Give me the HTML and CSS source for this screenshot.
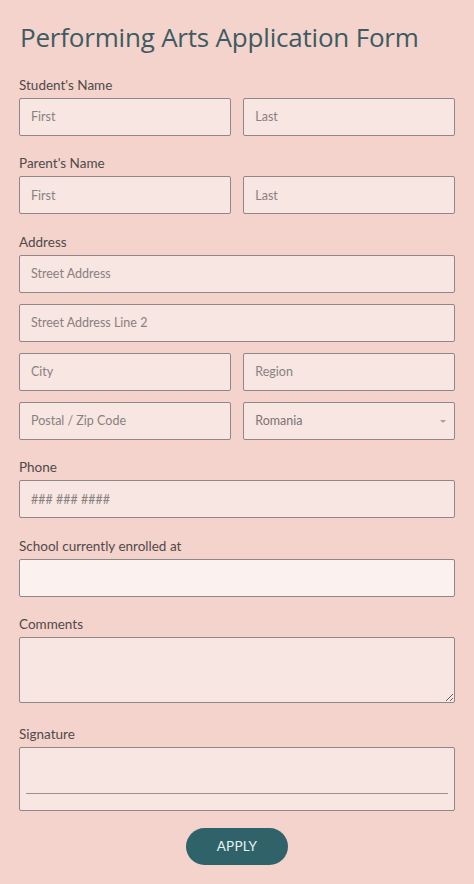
FILE: index.html
```html
<!DOCTYPE html>
<html lang="en">
<head>
<meta charset="utf-8">
<title>Performing Arts Application Form</title>
<link rel="stylesheet" href="styles.css">
</head>
<body>
<form class="form">
  <h1 class="title">Performing Arts Application Form</h1>

  <div class="field">
    <label class="label">Student's Name</label>
    <div class="row">
      <input class="input" type="text" placeholder="First">
      <input class="input" type="text" placeholder="Last">
    </div>
  </div>

  <div class="field">
    <label class="label">Parent's Name</label>
    <div class="row">
      <input class="input" type="text" placeholder="First">
      <input class="input" type="text" placeholder="Last">
    </div>
  </div>

  <div class="field">
    <label class="label">Address</label>
    <div class="stack">
      <input class="input" type="text" placeholder="Street Address">
      <input class="input" type="text" placeholder="Street Address Line 2">
      <div class="row">
        <input class="input" type="text" placeholder="City">
        <input class="input" type="text" placeholder="Region">
      </div>
      <div class="row">
        <input class="input" type="text" placeholder="Postal / Zip Code">
        <div class="select-wrap">
          <select class="input select">
            <option>Romania</option>
          </select>
        </div>
      </div>
    </div>
  </div>

  <div class="field">
    <label class="label">Phone</label>
    <input class="input" type="text" placeholder="### ### ####">
  </div>

  <div class="field">
    <label class="label">School currently enrolled at</label>
    <input class="input input-active" type="text">
  </div>

  <div class="field">
    <label class="label">Comments</label>
    <textarea class="input textarea"></textarea>
  </div>

  <div class="field field-sig">
    <label class="label">Signature</label>
    <div class="signature"><div class="sig-line"></div></div>
  </div>

  <div class="actions">
    <button type="button" class="apply">APPLY</button>
  </div>
</form>
</body>
</html>
```

FILE: styles.css
```css
* { box-sizing: border-box; }

html, body {
  margin: 0;
  padding: 0;
  background: #f3d3cb;
}

body {
  font-family: "Lato", "Noto Sans", sans-serif;
  color: #514a4a;
}

.form {
  width: 474px;
  padding: 19px 19px 0 19px;
}

.title {
  margin: 0 0 0 1px;
  font-family: "Open Sans", "Noto Sans", sans-serif;
  font-weight: 400;
  font-size: 26px;
  letter-spacing: -0.2px;
  line-height: 36px;
  color: #3e5b62;
}

.field {
  margin-top: 18.8px;
}

.field:first-of-type {
  margin-top: 21px;
}

.label {
  display: block;
  font-size: 13.5px;
  line-height: 18px;
  margin-bottom: 4px;
  color: #514a4a;
}

.row {
  display: grid;
  grid-template-columns: 1fr 1fr;
  column-gap: 12.6px;
}

.stack {
  display: flex;
  flex-direction: column;
  gap: 11.3px;
}

.input {
  display: block;
  width: 100%;
  height: 37.7px;
  margin: 0;
  padding: 0 11px;
  border: 1px solid #8f8686;
  border-radius: 2px;
  background: #f7e6e2;
  font-family: "Lato", "Noto Sans", sans-serif;
  font-size: 12.5px;
  color: #7d7373;
  outline: none;
}

.input::placeholder {
  color: #8a8080;
  opacity: 1;
}

.input-active {
  background: #fbf2ef;
}

.select-wrap {
  position: relative;
}

.select {
  appearance: none;
  -webkit-appearance: none;
  color: #7d7373;
}

.select-wrap::after {
  content: "";
  position: absolute;
  right: 9px;
  top: 18px;
  border-left: 3px solid transparent;
  border-right: 3px solid transparent;
  border-top: 3px solid #a99f9f;
  pointer-events: none;
}

.textarea {
  height: 66px;
  padding: 8px 11px;
  resize: vertical;
}

.field-sig {
  margin-top: 22px;
}

.signature {
  height: 63.4px;
  border: 1px solid #8f8686;
  border-radius: 2px;
  background: #f7e6e2;
  padding: 45px 6px 0 6px;
}

.sig-line {
  height: 1px;
  background: #9a9090;
}

.actions {
  display: flex;
  justify-content: center;
  margin-top: 17px;
}

.apply {
  width: 102px;
  height: 37px;
  border: none;
  border-radius: 19px;
  background: #2f6369;
  color: #e6f1f1;
  font-family: "Lato", "Noto Sans", sans-serif;
  font-size: 13.5px;
  letter-spacing: 0.2px;
  padding: 0;
}
```
